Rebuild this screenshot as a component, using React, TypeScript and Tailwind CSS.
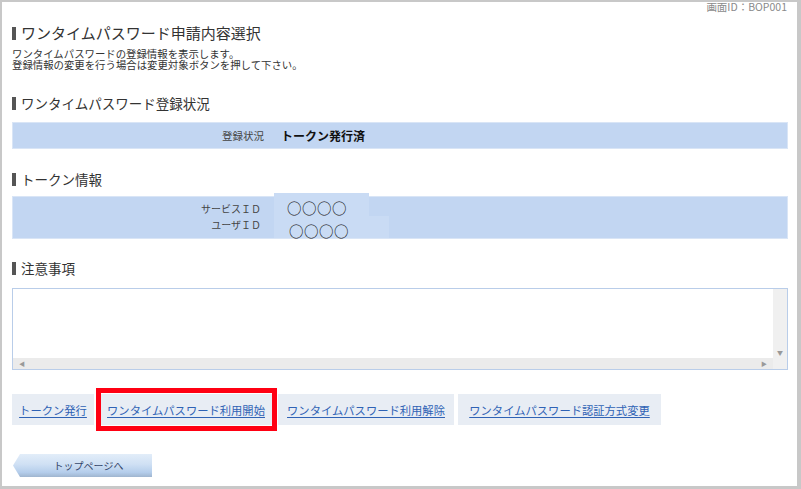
import React from "react";

const F = { fontFamily: '"Noto Sans CJK JP", "Noto Sans", sans-serif' };

function Heading({ text, size }: { text: string; size: string }) {
  return (
    <div className="flex items-center h-[16px] gap-[5px]">
      <div className="w-[4px] h-[13px] bg-[#555555]" />
      <div className={`${size} leading-[16px] text-[#333333]`}>{text}</div>
    </div>
  );
}

function LinkButton({ text, w }: { text: string; w: string }) {
  return (
    <div className={`${w} h-[31px] bg-[#e8edf4] flex items-center justify-center`}>
      <span className="text-[11.3px] leading-[14px] text-[#2f62b5] underline underline-offset-2 decoration-[#2f62b5]">
        {text}
      </span>
    </div>
  );
}

export default function App() {
  return (
    <div
      style={F}
      className="w-[801px] h-[489px] bg-white border-t-2 border-l-2 border-r-4 border-b-[3px] border-[#c8c8c8] flex flex-col pl-[10px] pr-[9px] overflow-hidden"
    >
      <div className="h-[9px] flex justify-end pr-[1px]">
        <span className="text-[10.5px] leading-[9px] text-[#8a8a8a]">画面ID：BOP001</span>
      </div>

      <div className="mt-[14px] flex items-center h-[16px] gap-[5px]">
        <div className="w-[4px] h-[13px] bg-[#555555]" />
        <div className="text-[15px] leading-[16px] text-[#333333]">ワンタイムパスワード申請内容選択</div>
      </div>

      <div className="mt-[7px] text-[10.4px] leading-[11px] text-[#333333]">
        <div>ワンタイムパスワードの登録情報を表示します。</div>
        <div>登録情報の変更を行う場合は変更対象ボタンを押して下さい。</div>
      </div>

      <div className="mt-[25px]">
        <Heading text="ワンタイムパスワード登録状況" size="text-[13.5px]" />
      </div>

      <div className="mt-[11px] h-[27px] bg-[#c2d6f2] border border-[#d9e5f6] flex items-center">
        <div className="w-[251px] text-right text-[10.5px] text-[#444444]">登録状況</div>
        <div className="ml-[17px] text-[12px] font-bold text-[#111111]">トークン発行済</div>
      </div>

      <div className="mt-[22px]">
        <Heading text="トークン情報" size="text-[13.5px]" />
      </div>

      <div className="mt-[9px] h-[43px] bg-[#c2d6f2] border border-[#d9e5f6] flex">
        <div className="w-[248px] flex flex-col items-end text-[10px] leading-[16px] text-[#444444] pt-[4px]">
          <div>サービスＩＤ</div>
          <div>ユーザＩＤ</div>
        </div>
        <div className="ml-[13px] -mt-[4px] flex flex-col">
          <div className="w-[95px] h-[23px] bg-[#c9dbf4] flex items-end pl-[13px]">
            <span className="text-[14.5px] leading-[17px] text-[#111111] tracking-[0.5px]">○○○○</span>
          </div>
          <div className="w-[115px] h-[23px] bg-[#c9dbf4] flex items-end pl-[15px]">
            <span className="text-[14.5px] leading-[15px] text-[#111111] tracking-[0.5px]">○○○○</span>
          </div>
        </div>
      </div>

      <div className="mt-[21px]">
        <Heading text="注意事項" size="text-[13.5px]" />
      </div>

      <div className="mt-[12px] h-[82px] border border-[#b9cde9] flex">
        <div className="flex-1 flex flex-col">
          <div className="flex-1 bg-white" />
          <div className="h-[11px] bg-[#ebebeb] flex items-center justify-between px-[6px] text-[6px] leading-[6px] text-[#999999]">
            <span>◀</span>
            <span>▶</span>
          </div>
        </div>
        <div className="w-[14px] bg-[#f0f0f0] flex flex-col justify-end items-center pb-[13px] text-[6px] leading-[6px] text-[#999999]">
          <span>▼</span>
        </div>
      </div>

      <div className="mt-[24px] flex gap-[4px] items-center">
        <LinkButton text="トークン発行" w="w-[82px]" />
        <div className="relative">
          <LinkButton text="ワンタイムパスワード利用開始" w="w-[176px]" />
          <div className="absolute -top-[6px] -bottom-[6px] -left-[2px] -right-[3px] border-[5px] border-[#ff0013]" />
        </div>
        <LinkButton text="ワンタイムパスワード利用解除" w="w-[176px]" />
        <LinkButton text="ワンタイムパスワード認証方式変更" w="w-[203px]" />
      </div>

      <div className="mt-[29px] ml-[1px] w-[139px] h-[23px] flex items-center justify-center pl-[12px] bg-[linear-gradient(to_bottom,#e2edf9_0%,#cfe0f4_45%,#b4cdeb_80%,#9fb5cf_100%)] [clip-path:polygon(7px_0,100%_0,100%_100%,7px_100%,0_50%)]">
        <span className="text-[10px] leading-[12px] text-[#34466a]">トップページへ</span>
      </div>
    </div>
  );
}
